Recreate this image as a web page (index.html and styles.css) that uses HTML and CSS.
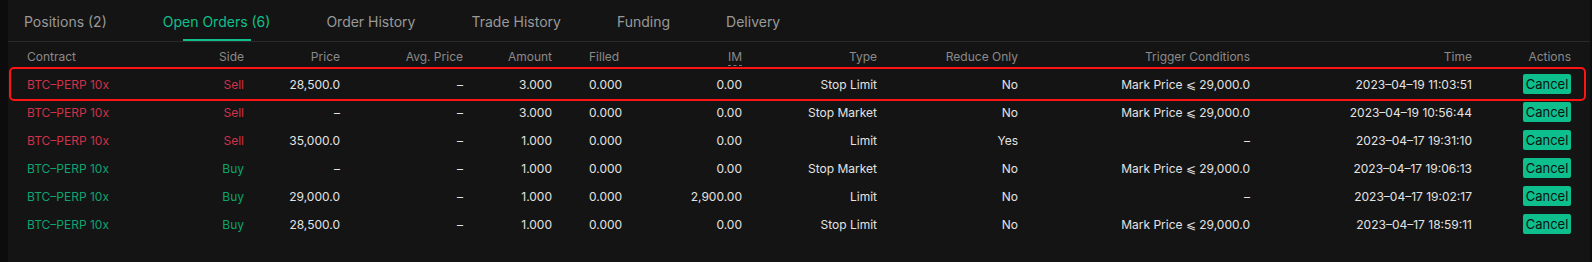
FILE: index.html
```html
<!DOCTYPE html>
<html lang="en">

<head>
    <meta charset="UTF-8">
    <meta name="viewport" content="width=device-width, initial-scale=1.0">
    <title>Open Orders</title>
    <link rel="stylesheet" href="styles.css">
</head>

<body>
    <div class="panel">
        <div class="tabs">
            <span class="tab">Positions (2)</span>
            <span class="tab active">Open Orders (6)</span>
            <span class="tab">Order History</span>
            <span class="tab">Trade History</span>
            <span class="tab">Funding</span>
            <span class="tab">Delivery</span>
        </div>

        <div class="orders">
            <div class="row head">
                <span>Contract</span>
                <span class="r">Side</span>
                <span class="r">Price</span>
                <span class="r">Avg. Price</span>
                <span class="r">Amount</span>
                <span class="filled">Filled</span>
                <span class="r"><span class="dotted">IM</span></span>
                <span class="r">Type</span>
                <span class="r">Reduce Only</span>
                <span class="r">Trigger Conditions</span>
                <span class="r">Time</span>
                <span class="r">Actions</span>
            </div>

            <div class="row marked sell">
                <span class="side">BTC–PERP 10x</span>
                <span class="r side">Sell</span>
                <span class="r">28,500.0</span>
                <span class="r">–</span>
                <span class="r">3.000</span>
                <span class="filled">0.000</span>
                <span class="r">0.00</span>
                <span class="r">Stop Limit</span>
                <span class="r">No</span>
                <span class="r">Mark Price ⩽ 29,000.0</span>
                <span class="r">2023–04–19 11:03:51</span>
                <span class="r"><button class="cancel">Cancel</button></span>
            </div>

            <div class="row sell">
                <span class="side">BTC–PERP 10x</span>
                <span class="r side">Sell</span>
                <span class="r">–</span>
                <span class="r">–</span>
                <span class="r">3.000</span>
                <span class="filled">0.000</span>
                <span class="r">0.00</span>
                <span class="r">Stop Market</span>
                <span class="r">No</span>
                <span class="r">Mark Price ⩽ 29,000.0</span>
                <span class="r">2023–04–19 10:56:44</span>
                <span class="r"><button class="cancel">Cancel</button></span>
            </div>

            <div class="row sell">
                <span class="side">BTC–PERP 10x</span>
                <span class="r side">Sell</span>
                <span class="r">35,000.0</span>
                <span class="r">–</span>
                <span class="r">1.000</span>
                <span class="filled">0.000</span>
                <span class="r">0.00</span>
                <span class="r">Limit</span>
                <span class="r">Yes</span>
                <span class="r">–</span>
                <span class="r">2023–04–17 19:31:10</span>
                <span class="r"><button class="cancel">Cancel</button></span>
            </div>

            <div class="row buy">
                <span class="side">BTC–PERP 10x</span>
                <span class="r side">Buy</span>
                <span class="r">–</span>
                <span class="r">–</span>
                <span class="r">1.000</span>
                <span class="filled">0.000</span>
                <span class="r">0.00</span>
                <span class="r">Stop Market</span>
                <span class="r">No</span>
                <span class="r">Mark Price ⩽ 29,000.0</span>
                <span class="r">2023–04–17 19:06:13</span>
                <span class="r"><button class="cancel">Cancel</button></span>
            </div>

            <div class="row buy">
                <span class="side">BTC–PERP 10x</span>
                <span class="r side">Buy</span>
                <span class="r">29,000.0</span>
                <span class="r">–</span>
                <span class="r">1.000</span>
                <span class="filled">0.000</span>
                <span class="r">2,900.00</span>
                <span class="r">Limit</span>
                <span class="r">No</span>
                <span class="r">–</span>
                <span class="r">2023–04–17 19:02:17</span>
                <span class="r"><button class="cancel">Cancel</button></span>
            </div>

            <div class="row buy">
                <span class="side">BTC–PERP 10x</span>
                <span class="r side">Buy</span>
                <span class="r">28,500.0</span>
                <span class="r">–</span>
                <span class="r">1.000</span>
                <span class="filled">0.000</span>
                <span class="r">0.00</span>
                <span class="r">Stop Limit</span>
                <span class="r">No</span>
                <span class="r">Mark Price ⩽ 29,000.0</span>
                <span class="r">2023–04–17 18:59:11</span>
                <span class="r"><button class="cancel">Cancel</button></span>
            </div>
        </div>
    </div>
</body>

</html>
```

FILE: styles.css
```css
body {
    margin: 0;
    background-color: #0c0c0c;
    font-family: Inter, "Liberation Sans", sans-serif;
    color: #e3e3e3;
}

.panel {
    margin: 0 2px 0 8px;
    height: 262px;
    background-color: #141414;
}

.tabs {
    display: flex;
    gap: 56px;
    height: 41px;
    padding-left: 16px;
    border-bottom: 1px solid #2a2a2a;
}

.tab {
    position: relative;
    line-height: 44px;
    font-size: 14px;
    color: #999;
}

.tab.active {
    color: #0fc08c;
}

.tab.active::after {
    content: "";
    position: absolute;
    left: 50%;
    bottom: 0;
    width: 68px;
    height: 2px;
    margin-left: -34px;
    background-color: #0fc08c;
}

.orders {
    padding: 0 0 0 4px;
}

.row {
    position: relative;
    display: grid;
    grid-template-columns: 137px 80px 96px 123px 89px 110px 80px 135px 141px 232px 222px 99px;
    align-items: center;
    width: max-content;
    height: 28px;
    padding: 0 11px 0 15px;
    font-size: 12px;
    white-space: nowrap;
}

.row.head {
    color: #8a8a8a;
}

.r {
    text-align: right;
}

.filled {
    padding-left: 37px;
}

.dotted {
    border-bottom: 1px dashed #777;
    padding-bottom: 1px;
}

.sell .side {
    color: #cf3249;
}

.buy .side {
    color: #0ea371;
}

.marked::after {
    content: "";
    position: absolute;
    top: -3px;
    bottom: -3px;
    left: -3px;
    right: -4px;
    border: 2px solid #ff1414;
    border-radius: 5px;
}

.cancel {
    width: 48px;
    height: 20px;
    padding: 0;
    border: none;
    border-radius: 2px;
    background-color: #0cbf8d;
    color: #111;
    font-family: inherit;
    font-size: 13px;
}
```
